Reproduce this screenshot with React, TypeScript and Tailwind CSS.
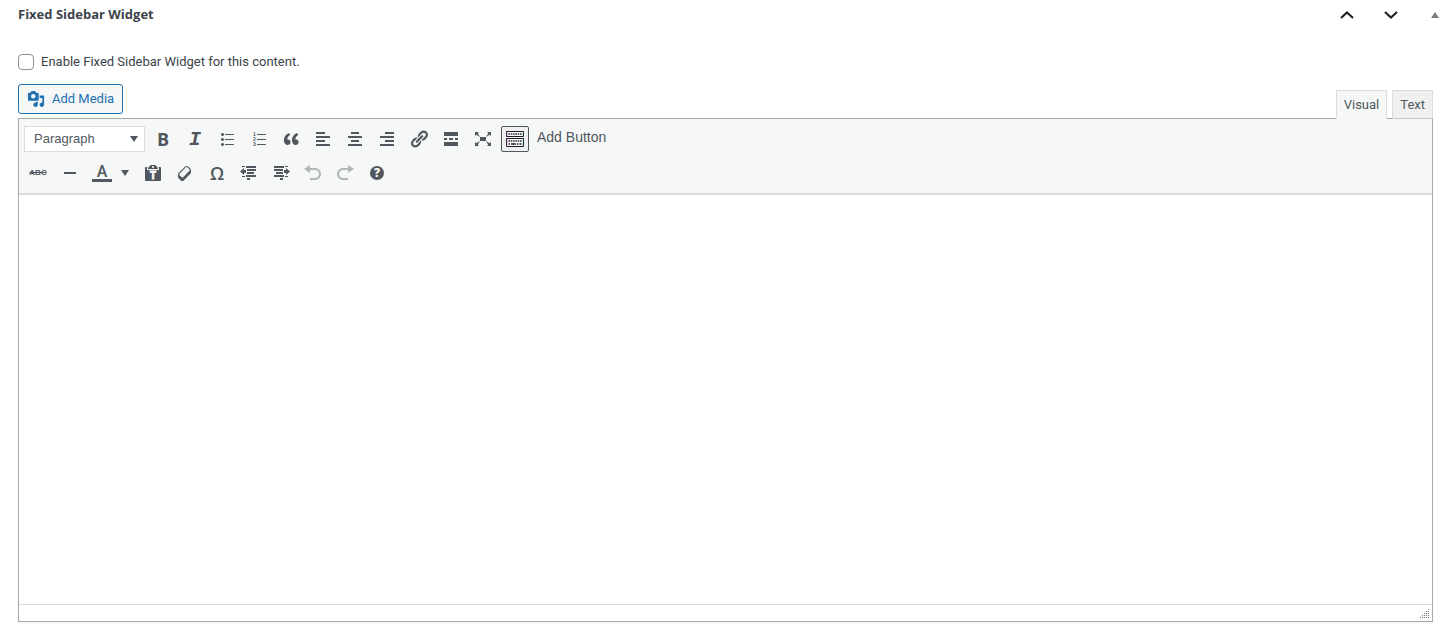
import { useState } from 'react';
import type { ReactNode } from 'react';

type IconProps = { children: ReactNode; className?: string };

function Icon({ children, className = 'h-5 w-5' }: IconProps) {
  return (
    <svg viewBox="0 0 20 20" fill="currentColor" aria-hidden="true" className={className}>
      {children}
    </svg>
  );
}

const bulletList = 'M5.5 7C4.67 7 4 6.33 4 5.5 4 4.68 4.67 4 5.5 4 6.32 4 7 4.68 7 5.5 7 6.33 6.32 7 5.5 7zM8 5h9v1H8V5zm-2.5 7c-.83 0-1.5-.67-1.5-1.5C4 9.68 4.67 9 5.5 9c.82 0 1.5.68 1.5 1.5 0 .83-.68 1.5-1.5 1.5zM8 10h9v1H8v-1zm-2.5 7c-.83 0-1.5-.67-1.5-1.5 0-.82.67-1.5 1.5-1.5.82 0 1.5.68 1.5 1.5 0 .83-.68 1.5-1.5 1.5zM8 15h9v1H8v-1z';
const quote = 'M9.49 13.22c0-.74-.2-1.38-.61-1.9-.62-.78-1.83-.88-2.53-.72-.29-1.65 1.11-3.75 2.92-4.65L7.88 4c-2.73 1.3-5.42 4.28-4.96 8.05C3.21 14.43 4.59 16 6.54 16c.85 0 1.56-.25 2.12-.75s.83-1.18.83-2.03zm8.05 0c0-.74-.2-1.38-.61-1.9-.63-.78-1.83-.88-2.53-.72-.29-1.65 1.11-3.75 2.92-4.65L15.93 4c-2.73 1.3-5.41 4.28-4.95 8.05.29 2.38 1.66 3.95 3.61 3.95.85 0 1.56-.25 2.12-.75s.83-1.18.83-2.03z';
const link = 'M17.74 2.76c1.68 1.69 1.68 4.41 0 6.1l-1.53 1.52c-1.12 1.12-2.7 1.47-4.14 1.09l2.62-2.61.76-.77.76-.76c.84-.84.84-2.2 0-3.04-.84-.85-2.2-.85-3.04 0l-.77.76-3.38 3.38c-.37-1.44-.02-3.02 1.1-4.14l1.52-1.53c1.69-1.68 4.42-1.68 6.1 0zM8.59 13.43l5.34-5.34c.42-.42.42-1.1 0-1.52-.44-.43-1.13-.39-1.53 0l-5.33 5.34c-.42.42-.42 1.1 0 1.52.44.43 1.13.39 1.52 0zm-.76 2.29l4.14-4.15c.38 1.44.03 3.02-1.09 4.14l-1.52 1.53c-1.69 1.68-4.41 1.68-6.1 0-1.68-1.68-1.68-4.42 0-6.1l1.53-1.52c1.12-1.12 2.7-1.47 4.14-1.1l-4.14 4.15c-.85.84-.85 2.2 0 3.05.84.84 2.2.84 3.04 0z';
const eraser = 'M14.29 4.59l1.1 1.11c.41.4.61.94.61 1.47v2.12c0 .53-.2 1.07-.61 1.47l-6.63 6.63c-.4.41-.94.61-1.47.61s-1.07-.2-1.47-.61l-1.11-1.1-1.1-1.11c-.41-.4-.61-.94-.61-1.47v-2.12c0-.54.2-1.07.61-1.48l6.63-6.62c.4-.41.94-.61 1.47-.61s1.06.2 1.47.61zm-6.21 9.7l6.42-6.42c.39-.39.39-1.03 0-1.43L12.36 4.3c-.19-.19-.45-.29-.72-.29s-.52.1-.71.29l-6.42 6.42c-.39.4-.39 1.04 0 1.43l2.14 2.14c.38.38 1.04.38 1.43 0z';
const clipboard = 'M12.38 2L15 5v1H5V5l2.64-3h4.74zM10 5c.55 0 1-.44 1-1 0-.55-.45-1-1-1s-1 .45-1 1c0 .56.45 1 1 1zm5.45-1H17c.55 0 1 .45 1 1v12c0 .56-.45 1-1 1H3c-.55 0-1-.44-1-1V5c0-.55.45-1 1-1h1.55L4 4.63V7h12V4.63z';
const media = 'M13 11V4c0-.55-.45-1-1-1h-1.67L9 1H5L3.67 3H2c-.55 0-1 .45-1 1v7c0 .55.45 1 1 1h10c.55 0 1-.45 1-1zM7 4.5c1.38 0 2.5 1.12 2.5 2.5S8.38 9.5 7 9.5 4.5 8.38 4.5 7 5.62 4.5 7 4.5zM14 6h5v10.5c0 1.38-1.12 2.5-2.5 2.5S14 17.88 14 16.5s1.12-2.5 2.5-2.5c.17 0 .34.02.5.05V9h-3V6zm-4 8.05V13h2v3.5c0 1.38-1.12 2.5-2.5 2.5S7 17.88 7 16.5 8.12 14 9.5 14c.17 0 .34.02.5.05z';

type Tool = { label: string; icon: ReactNode; disabled?: boolean };

const firstRow: Tool[] = [
  { label: 'Bold', icon: <span className="font-['Open_Sans',sans-serif] text-lg leading-none font-bold">B</span> },
  { label: 'Italic', icon: <span className="pt-[2px] font-['Liberation_Mono',monospace] text-xl leading-none font-bold italic">I</span> },
  { label: 'Bulleted list', icon: <Icon><path d={bulletList} /></Icon> },
  {
    label: 'Numbered list',
    icon: (
      <Icon>
        <path d="M8 5h9v1H8zM8 10h9v1H8zM8 15h9v1H8z" />
        <g fontFamily="Liberation Sans, sans-serif" fontSize="5" fontWeight="700">
          <text x="4" y="7">1</text>
          <text x="4" y="12">2</text>
          <text x="4" y="17">3</text>
        </g>
      </Icon>
    ),
  },
  { label: 'Blockquote', icon: <Icon><path d={quote} /></Icon> },
  { label: 'Align left', icon: <Icon><path d="M12 5V3H3v2h9zm5 4V7H3v2h14zm-5 4v-2H3v2h9zm5 4v-2H3v2h14z" /></Icon> },
  { label: 'Align center', icon: <Icon><path d="M14 5V3H6v2h8zm3 4V7H3v2h14zm-3 4v-2H6v2h8zm3 4v-2H3v2h14z" /></Icon> },
  { label: 'Align right', icon: <Icon><path d="M17 5V3H8v2h9zm0 4V7H3v2h14zm0 4v-2H8v2h9zm0 4v-2H3v2h14z" /></Icon> },
  { label: 'Insert link', icon: <Icon><path d={link} /></Icon> },
  { label: 'Read more', icon: <Icon><path d="M17 7V3H3v4h14zM6 11V9H3v2h3zm6 0V9H8v2h4zm5 0V9h-3v2h3zm0 6v-4H3v4h14z" /></Icon> },
  {
    label: 'Fullscreen',
    icon: (
      <Icon>
        <path d="M7 8h6v4H7zm-5 5v4h4l-1.2-1.2L7 12l-3.8 2.2M14 17h4v-4l-1.2 1.2L13 12l2.2 3.8M14 3l1.3 1.3L13 8l3.8-2.2L18 7V3M6 3H2v4l1.2-1.2L7 8 4.7 4.3" />
      </Icon>
    ),
  },
];

const secondRow: Tool[] = [
  {
    label: 'Paste as text',
    icon: (
      <Icon>
        <path d={clipboard} />
        <text x="10" y="16" textAnchor="middle" fill="#f6f7f7" stroke="#f6f7f7" strokeWidth="0.8" fontFamily="Liberation Sans, sans-serif" fontSize="10" fontWeight="700">T</text>
      </Icon>
    ),
  },
  { label: 'Clear formatting', icon: <Icon><path d={eraser} /></Icon> },
  { label: 'Special character', icon: <span className="font-['Open_Sans',sans-serif] text-lg leading-none font-semibold">Ω</span> },
  { label: 'Decrease indent', icon: <Icon><path d="M3 3h3v1H3zM7 3h10v2H7zM8 6h9v2H8zM8 9h7v2H8zM7 12h10v2H7zM3 13h3v1H3zM8 15h3v2H8zM5 5v2h2v3H5v2L1 8.5z" /></Icon> },
  { label: 'Increase indent', icon: <Icon><path d="M3 3h10v2H3zM14 3h3v1h-3zM3 6h9v2H3zM5 9h7v2H5zM3 12h10v2H3zM14 13h3v1h-3zM9 15h3v2H9zM15 5l4 3.5-4 3.5v-2h-2V7h2z" /></Icon> },
  { label: 'Undo', disabled: true, icon: <Icon><path d="M12 5H7V2L1 6l6 4V7h5c2.2 0 4 1.8 4 4s-1.8 4-4 4H7v2h5c3.3 0 6-2.7 6-6s-2.7-6-6-6z" /></Icon> },
  { label: 'Redo', disabled: true, icon: <Icon><path d="M8 5h5V2l6 4-6 4V7H8c-2.2 0-4 1.8-4 4s1.8 4 4 4h5v2H8c-3.3 0-6-2.7-6-6s2.7-6 6-6z" /></Icon> },
  {
    label: 'Keyboard shortcuts',
    icon: (
      <Icon>
        <circle cx="10" cy="10" r="7" />
        <text x="10" y="14" textAnchor="middle" fill="#f6f7f7" fontFamily="Open Sans, sans-serif" fontSize="12" fontWeight="800">?</text>
      </Icon>
    ),
  },
];

function ToolButton({ label, icon, disabled }: Tool) {
  return (
    <button
      type="button"
      aria-label={label}
      disabled={disabled}
      className="flex h-[26px] w-7 items-center justify-center rounded-xs leading-none hover:bg-white disabled:opacity-40"
    >
      {icon}
    </button>
  );
}

function Caret() {
  return (
    <svg viewBox="0 0 8 6" fill="currentColor" aria-hidden="true" className="h-[6px] w-2">
      <path d="M0 0h8L4 6z" />
    </svg>
  );
}

export default function App() {
  const [enabled, setEnabled] = useState(false);
  const [tab, setTab] = useState('Visual');
  const [content, setContent] = useState('');

  return (
    <main className="bg-white font-[Roboto,sans-serif] text-[13px] text-[#3c434a]">
      <header className="flex h-[30px] items-center justify-between pr-2 pl-[18px]">
        <h2 className="font-['Open_Sans',sans-serif] font-bold">Fixed Sidebar Widget</h2>
        <div className="flex items-center text-[#1d2327]">
          <button type="button" aria-label="Move up" className="flex h-7 w-11 items-center justify-center">
            <svg viewBox="0 0 14 8" fill="none" stroke="currentColor" strokeWidth="2.2" aria-hidden="true" className="h-2 w-[14px]">
              <path d="M1 7l6-5.5L13 7" />
            </svg>
          </button>
          <button type="button" aria-label="Move down" className="flex h-7 w-11 items-center justify-center">
            <svg viewBox="0 0 14 8" fill="none" stroke="currentColor" strokeWidth="2.2" aria-hidden="true" className="h-2 w-[14px]">
              <path d="M1 1l6 5.5L13 1" />
            </svg>
          </button>
          <button type="button" aria-label="Toggle panel" className="flex h-7 w-[26px] items-center justify-end text-[#787c82]">
            <svg viewBox="0 0 8 6" fill="currentColor" aria-hidden="true" className="h-[6px] w-2">
              <path d="M0 6h8L4 0z" />
            </svg>
          </button>
        </div>
      </header>

      <div className="pt-[22px] pr-[14px] pb-3 pl-[18px]">
        <label className="flex h-5 items-center gap-[7px]">
          <input
            type="checkbox"
            checked={enabled}
            onChange={(e) => setEnabled(e.target.checked)}
            className="h-4 w-4 appearance-none rounded border border-[#8c8f94] bg-white checked:bg-[#2271b1]"
          />
          Enable Fixed Sidebar Widget for this content.
        </label>

        <div className="mt-3 flex items-start justify-between">
          <button
            type="button"
            className="flex h-[30px] items-center gap-[7px] rounded-[3px] border border-[#2271b1] bg-[#f6f7f7] px-2 text-[#2271b1]"
          >
            <Icon className="h-[18px] w-[18px]"><path d={media} /></Icon>
            Add Media
          </button>
          <div className="mt-[6px] flex gap-[5px]">
            {['Visual', 'Text'].map((name) => (
              <button
                key={name}
                type="button"
                onClick={() => setTab(name)}
                className={`relative h-[29px] border border-[#dcdcde] px-[7px] text-[#50575e] ${
                  tab === name ? 'z-10 border-b-[#f6f7f7] bg-[#f6f7f7]' : 'border-b-[#c3c4c7] bg-[#f0f0f1]'
                }`}
              >
                {name}
              </button>
            ))}
          </div>
        </div>

        <section className="-mt-px border border-[#a7aaad] shadow-xs">
          <div className="flex flex-col gap-2 border-b-2 border-[#dcdcde] bg-[#f6f7f7] px-[5px] py-[7px] text-[#50575e]">
            <div className="flex items-center gap-1">
              <button
                type="button"
                aria-haspopup="listbox"
                className="flex h-[26px] w-[121px] items-center justify-between border border-[#dcdcde] bg-white pr-[6px] pl-[9px] font-['Liberation_Sans',sans-serif]"
              >
                Paragraph
                <Caret />
              </button>
              {firstRow.map((tool) => (
                <ToolButton key={tool.label} {...tool} />
              ))}
              <button
                type="button"
                aria-label="Toolbar toggle"
                aria-pressed="true"
                className="flex h-[26px] w-7 items-center justify-center rounded-xs border border-[#50575e] bg-[#f0f0f1] text-[#1d1a26]"
              >
                <svg viewBox="0 0 18 16" fill="none" stroke="currentColor" aria-hidden="true" className="h-4 w-[18px]">
                  <path d="M.5.5h17v5H.5zM.5 7.5h17v8H.5z" fill="#fff" />
                  <path d="M2.5 3h13" strokeWidth="1.6" strokeDasharray="1.5 0.8" />
                  <path d="M2.5 10h13" strokeWidth="1.6" strokeDasharray="1.5 0.8" />
                  <path d="M2.5 13h1.5M5 13h5M11 13h1.5M13.5 13h2" strokeWidth="1.6" />
                  <path d="M1.2 1v4M1.2 8v7" stroke="#c060c0" strokeWidth="0.5" />
                  <path d="M16.8 1v4M16.8 8v7" stroke="#40c0a0" strokeWidth="0.5" />
                </svg>
              </button>
              <button type="button" className="px-1 pb-1 font-['Liberation_Sans',sans-serif] text-sm">Add Button</button>
            </div>

            <div className="flex items-center gap-1">
              <ToolButton
                label="Strikethrough"
                icon={<span className="font-['Liberation_Sans',sans-serif] text-[8px] font-bold line-through">ABC</span>}
              />
              <ToolButton label="Horizontal line" icon={<Icon><path d="M4 9h12v2H4z" /></Icon>} />
              <div className="flex w-[47px] items-center justify-between pr-[6px]">
                <button type="button" aria-label="Text color" className="flex h-[26px] w-7 items-center justify-center">
                  <span className="flex h-[18px] w-5 items-center justify-center border-b-3 border-[#50575e] text-base leading-none font-medium">A</span>
                </button>
                <button type="button" aria-label="Choose text color"><Caret /></button>
              </div>
              {secondRow.map((tool) => (
                <ToolButton key={tool.label} {...tool} />
              ))}
            </div>
          </div>

          <textarea
            aria-label="Content"
            value={content}
            onChange={(e) => setContent(e.target.value)}
            className="block h-[calc(100vh-225px)] min-h-40 w-full resize-none bg-white p-3 outline-none"
          />
          <div className="flex h-[17px] items-end justify-end border-t border-[#dcdcde] p-[2px]">
            <svg viewBox="0 0 10 10" fill="#787c82" aria-hidden="true" className="h-[10px] w-[10px]">
              <path d="M8 0h1v1H8zM6 2h1v1H6zM8 2h1v1H8zM4 4h1v1H4zM6 4h1v1H6zM8 4h1v1H8zM2 6h1v1H2zM4 6h1v1H4zM6 6h1v1H6zM8 6h1v1H8zM0 8h1v1H0zM2 8h1v1H2zM4 8h1v1H4zM6 8h1v1H6zM8 8h1v1H8z" />
            </svg>
          </div>
        </section>
      </div>
    </main>
  );
}
